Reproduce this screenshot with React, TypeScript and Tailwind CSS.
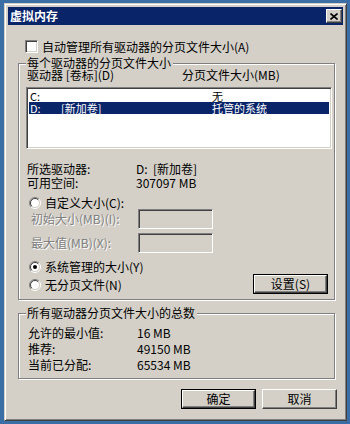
const font = "font-['Noto_Sans_CJK_SC','Liberation_Sans',sans-serif]";

function Radio({ checked = false }: { checked?: boolean }) {
  return (
    <svg width="12" height="12" viewBox="0 0 12 12" className="shrink-0">
      <circle cx="6" cy="6" r="4.5" fill="#fff" />
      <path d="M9.9 2.1 A5.5 5.5 0 0 0 2.1 9.9" fill="none" stroke="#808080" />
      <path d="M2.1 9.9 A5.5 5.5 0 0 0 9.9 2.1" fill="none" stroke="#fff" />
      <path d="M9.2 2.8 A4.5 4.5 0 0 0 2.8 9.2" fill="none" stroke="#404040" />
      <path d="M2.8 9.2 A4.5 4.5 0 0 0 9.2 2.8" fill="none" stroke="#d4d0c8" />
      {checked && <circle cx="6" cy="6" r="2" fill="#000" />}
    </svg>
  );
}

const sunken =
  'border border-t-[#808080] border-l-[#808080] border-b-white border-r-white shadow-[inset_1px_1px_0_#404040,inset_-1px_-1px_0_#d4d0c8]';

function Button({ label, isDefault = false }: { label: string; isDefault?: boolean }) {
  const inner = (
    <div className="h-full w-full flex items-center justify-center border border-t-white border-l-white border-r-[#404040] border-b-[#404040] shadow-[inset_-1px_-1px_0_#808080] text-[12px] text-black">
      {label}
    </div>
  );
  return isDefault ? (
    <div className="w-[75px] h-[20px] border border-black">{inner}</div>
  ) : (
    <div className="w-[75px] h-[20px]">{inner}</div>
  );
}

function Group({ title, className, children }: { title: string; className: string; children: React.ReactNode }) {
  return (
    <div
      className={`relative border border-[#808080] shadow-[inset_1px_1px_0_#fff,1px_1px_0_#fff] ${className}`}
    >
      <span className="absolute -top-[8px] left-[7px] bg-[#d4d0c8] pl-px pr-[2px] leading-[14px] text-[12px] text-black">
        {title}
      </span>
      {children}
    </div>
  );
}

const disabled = 'text-[#808080] [text-shadow:1px_1px_0_#fff]';

export default function App() {
  return (
    <div className={`w-[350px] h-[424px] bg-[#3a6ea5] pt-[3px] pl-[4px] ${font}`}>
      <div className="w-[343px] h-[418px] bg-[#d4d0c8] border border-t-[#d4d0c8] border-l-[#d4d0c8] border-r-[#404040] border-b-[#404040] shadow-[inset_1px_1px_0_#fff,inset_-1px_-1px_0_#808080] p-[3px]">
        {/* title bar */}
        <div className="h-[18px] bg-[#0a246a] flex items-center justify-between pl-[2px] pr-[1px]">
          <span className="text-white font-bold text-[12px] leading-none">虚拟内存</span>
          <div className="w-[16px] h-[14px] flex items-center justify-center border border-t-white border-l-white border-r-[#404040] border-b-[#404040] shadow-[inset_-1px_-1px_0_#808080] bg-[#d4d0c8]">
            <svg width="8" height="7" viewBox="0 0 8 7">
              <path d="M0.5 0.5 L7.5 6.5 M7.5 0.5 L0.5 6.5" stroke="#000" strokeWidth="1.6" />
            </svg>
          </div>
        </div>

        {/* auto manage */}
        <div className="mt-[15px] ml-[17px] h-[13px] flex items-center gap-[4px] text-[12px] text-black">
          <div className={`w-[13px] h-[13px] bg-white ${sunken}`} />
          <span className="leading-[13px]">自动管理所有驱动器的分页文件大小(A)</span>
        </div>

        {/* per drive group */}
        <Group title="每个驱动器的分页文件大小" className="mt-[10px] ml-[10px] w-[317px] h-[237px]">
          <div className="mt-[4px] pl-[8px] h-[13px] flex text-[12px] leading-[13px] text-black">
            <span className="w-[155px]">驱动器 [卷标](D)</span>
            <span>分页文件大小(MB)</span>
          </div>

          <div className={`mt-[6px] ml-[7px] w-[306px] h-[62px] bg-white p-[2px] ${sunken}`}>
            <div className="h-[12px] flex items-center text-[11px] leading-[12px] text-black">
              <span className="w-[183px] pl-px">C:</span>
              <span>无</span>
            </div>
            <div className="h-[12px] flex items-center text-[11px] leading-[12px] text-white bg-[#0a246a]">
              <span className="w-[32px] pl-px">D:</span>
              <span className="w-[151px]">[新加卷]</span>
              <span>托管的系统</span>
            </div>
          </div>

          <div className="mt-[13px] pl-[8px] text-[12px] leading-[14px] text-black">
            <div className="flex">
              <span className="w-[109px]">所选驱动器:</span>
              <span>D:&nbsp;&nbsp;[新加卷]</span>
            </div>
            <div className="flex">
              <span className="w-[109px]">可用空间:</span>
              <span>307097 MB</span>
            </div>
          </div>

          <div className="mt-[7px] pl-[10px] h-[12px] flex items-center gap-[4px] text-[12px] leading-[12px] text-black">
            <Radio />
            <span>自定义大小(C):</span>
          </div>

          <div className="pl-[12px] h-[20px] flex items-center text-[12px]">
            <span className={`w-[107px] ${disabled}`}>初始大小(MB)(I):</span>
            <div className={`w-[75px] h-[20px] bg-[#d4d0c8] ${sunken}`} />
          </div>
          <div className="mt-[4px] pl-[12px] h-[20px] flex items-center text-[12px]">
            <span className={`w-[107px] ${disabled}`}>最大值(MB)(X):</span>
            <div className={`w-[75px] h-[20px] bg-[#d4d0c8] ${sunken}`} />
          </div>

          <div className="mt-[7px] flex items-start justify-between pr-[6px]">
            <div className="pl-[10px] flex flex-col gap-[4px] text-[12px] leading-[14px] text-black">
              <div className="h-[14px] flex items-center gap-[4px]">
                <Radio checked />
                <span>系统管理的大小(Y)</span>
              </div>
              <div className="h-[14px] flex items-center gap-[4px]">
                <Radio />
                <span>无分页文件(N)</span>
              </div>
            </div>
            <div className="mt-[14px]">
              <Button label="设置(S)" isDefault />
            </div>
          </div>
        </Group>

        {/* totals group */}
        <Group title="所有驱动器分页文件大小的总数" className="mt-[13px] ml-[10px] w-[317px] h-[66px]">
          <div className="mt-[11px] pl-[9px] text-[12px] leading-[16px] text-black">
            <div className="flex">
              <span className="w-[109px]">允许的最小值:</span>
              <span>16 MB</span>
            </div>
            <div className="flex">
              <span className="w-[109px]">推荐:</span>
              <span>49150 MB</span>
            </div>
            <div className="flex">
              <span className="w-[109px]">当前已分配:</span>
              <span>65534 MB</span>
            </div>
          </div>
        </Group>

        {/* dialog buttons */}
        <div className="mt-[10px] mr-[6px] flex justify-end gap-[6px]">
          <Button label="确定" isDefault />
          <Button label="取消" />
        </div>
      </div>
    </div>
  );
}
